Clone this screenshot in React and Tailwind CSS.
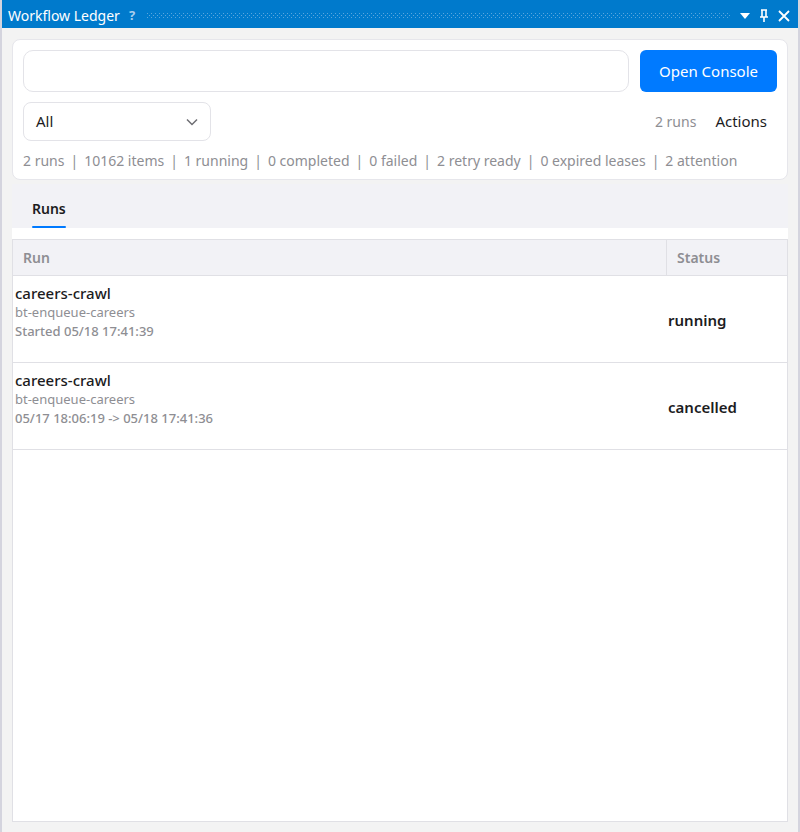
import React from "react";

const stats = [
  "2 runs",
  "10162 items",
  "1 running",
  "0 completed",
  "0 failed",
  "2 retry ready",
  "0 expired leases",
  "2 attention",
];

const runs = [
  {
    name: "careers-crawl",
    job: "bt-enqueue-careers",
    time: "Started 05/18 17:41:39",
    status: "running",
  },
  {
    name: "careers-crawl",
    job: "bt-enqueue-careers",
    time: "05/17 18:06:19 -> 05/18 17:41:36",
    status: "cancelled",
  },
];

function TitleBar() {
  return (
    <div className="h-[28px] bg-[#007acc] flex items-center pl-[6px] pr-[8px] pt-[3px] text-white shrink-0">
      <span className="text-[14px] leading-none">Workflow Ledger</span>
      <span className="ml-[9px] text-[13px] font-bold text-[#a9cfee] leading-none">?</span>
      <svg className="ml-[12px] flex-1 h-[6px]" preserveAspectRatio="none">
        <defs>
          <pattern id="dots" width="4" height="4" patternUnits="userSpaceOnUse">
            <rect x="0" y="0" width="1" height="1" fill="#5aa6dd" />
            <rect x="2" y="2" width="1" height="1" fill="#5aa6dd" />
          </pattern>
        </defs>
        <rect width="100%" height="100%" fill="url(#dots)" />
      </svg>
      <div className="flex items-center ml-[10px] gap-[9px]">
        <svg width="10" height="6" viewBox="0 0 10 6">
          <path d="M0 0 H10 L5 6 Z" fill="white" />
        </svg>
        <svg width="10" height="13" viewBox="0 0 10 13">
          <path d="M2 1 H8 M3 1 V8 M7 1 V8 M1 8 H9 M5 8 V13" stroke="white" strokeWidth="1.6" fill="none" />
        </svg>
        <svg width="12" height="12" viewBox="0 0 12 12">
          <path d="M1 1 L11 11 M11 1 L1 11" stroke="white" strokeWidth="1.8" />
        </svg>
      </div>
    </div>
  );
}

export default function App() {
  return (
    <div
      className="w-[800px] h-[832px] bg-[#f3f3f3] border-x-2 border-[#d4d4de] flex flex-col overflow-hidden"
      style={{ fontFamily: '"Noto Sans", "Open Sans", sans-serif' }}
    >
      <TitleBar />

      <div className="flex-1 flex flex-col px-[10px] pt-[11px] pb-[10px]">
        <div className="bg-white border border-[#e6e6eb] rounded-[8px] px-[10px] pt-[10px] pb-[8px]">
          <div className="flex items-center gap-[11px]">
            <input className="flex-1 h-[42px] border border-[#e3e3e8] rounded-[10px] px-3 outline-none" />
            <button className="w-[137px] h-[42px] rounded-[6px] bg-[#007aff] text-white text-[15px]">
              Open Console
            </button>
          </div>
          <div className="flex items-center mt-[10px]">
            <div className="w-[188px] h-[39px] border border-[#e3e3e8] rounded-[8px] flex items-center justify-between pl-[12px] pr-[12px]">
              <span className="text-[15px] text-[#1c1c1e]">All</span>
              <svg width="12" height="8" viewBox="0 0 12 8">
                <path d="M1 1.5 L6 6.5 L11 1.5" stroke="#6e6e73" strokeWidth="1.5" fill="none" />
              </svg>
            </div>
            <div className="flex-1" />
            <span className="text-[14px] text-[#8e8e93]">2 runs</span>
            <span className="ml-[19px] mr-[10px] text-[15px] text-[#1c1c1e]">Actions</span>
          </div>
          <div className="mt-[9px] text-[14px] text-[#8e8e93] whitespace-nowrap">
            {stats.map((s, i) => (
              <React.Fragment key={i}>
                {i > 0 && <span className="mx-[6px]">|</span>}
                <span>{s}</span>
              </React.Fragment>
            ))}
          </div>
        </div>

        <div className="mt-[4px] flex-1 flex flex-col">
          <div className="h-[44px] bg-[#f2f2f6] flex items-end px-[20px] shrink-0">
            <div className="flex flex-col items-center">
              <span className="text-[14px] font-semibold text-[#1c1c1e] leading-[20px]">Runs</span>
              <div className="mt-[7px] h-[2px] w-full bg-[#007aff] rounded-full" />
            </div>
          </div>
          <div className="bg-white pt-[11px] flex-1 flex flex-col">
            <div className="flex-1 border border-[#e0e0e5] flex flex-col">
              <div className="grid grid-cols-[654px_1fr] h-[36px] bg-[#f2f2f6] border-b border-[#e0e0e5] shrink-0">
                <div className="flex items-center pl-[10px] text-[14px] font-semibold text-[#8e8e93] border-r border-[#e0e0e5]">
                  Run
                </div>
                <div className="flex items-center pl-[10px] text-[14px] font-semibold text-[#8e8e93]">
                  Status
                </div>
              </div>
              {runs.map((r, i) => (
                <div key={i} className="grid grid-cols-[654px_1fr] h-[87px] border-b border-[#e0e0e5]">
                  <div className="pl-[2px] pt-[7px] flex flex-col">
                    <span className="text-[15px] font-medium text-[#1c1c1e] leading-[20px]">{r.name}</span>
                    <span className="text-[13px] text-[#8e8e93] leading-[19px]">{r.job}</span>
                    <span className="text-[13px] font-medium text-[#8e8e93] leading-[18px]">{r.time}</span>
                  </div>
                  <div className="flex items-center pl-[1px] pt-[2px] text-[15px] font-semibold text-[#1c1c1e]">
                    {r.status}
                  </div>
                </div>
              ))}
            </div>
          </div>
        </div>
      </div>
    </div>
  );
}
